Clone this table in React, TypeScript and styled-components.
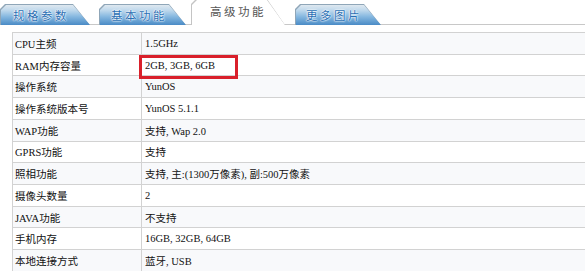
import styled, { createGlobalStyle } from "styled-components";

const GlobalStyle = createGlobalStyle`
  html, body {
    margin: 0;
    padding: 0;
    background: #ffffff;
    overflow: hidden;
  }
  body {
    font-family: "Liberation Serif", "Noto Sans CJK SC", serif;
  }
`;

const Page = styled.div`
  width: 585px;
  height: 271px;
  overflow: hidden;
  background: #fff;
`;

const TabBar = styled.div`
  display: flex;
  align-items: flex-end;
  height: 24px;
  border-bottom: 1px solid #c8c8c8;
`;

const tabShape = "polygon(0 5px, 5px 0, calc(100% - 17px) 0, 100% 100%, 0 100%)";

const Tab = styled.div<{ $offset: number; $width: number }>`
  margin-left: ${(p) => p.$offset}px;
  width: ${(p) => p.$width}px;
  height: 21px;
  margin-bottom: -1px;
  padding: 1px 0 0 1px;
  box-sizing: border-box;
  background: #8fa6b8;
  clip-path: ${tabShape};
`;

const TabFace = styled.div<{ $pad: number }>`
  height: 100%;
  display: flex;
  align-items: center;
  padding-left: ${(p) => p.$pad}px;
  box-sizing: border-box;
  background: linear-gradient(#dfe8ef 0%, #bcd7ec 28%, #86b8e0 58%, #4a8bc6 100%);
  clip-path: ${tabShape};
  font-family: "Noto Sans CJK SC", sans-serif;
  font-size: 11.5px;
  letter-spacing: 2.5px;
  color: #2a6fb3;
  text-shadow: 0 0 1px #fff, 0 0 2px #fff, 0 0 2px #fff;
`;

const ActiveTab = styled.div<{ $offset: number; $width: number }>`
  margin-left: ${(p) => p.$offset}px;
  width: ${(p) => p.$width}px;
  height: 26px;
  margin-bottom: -1px;
  padding: 1px 0 0 1px;
  box-sizing: border-box;
  background: #c4c4c4;
  clip-path: polygon(0 5px, 5px 0, calc(100% - 18px) 0, 100% 100%, 0 100%);
`;

const ActiveFace = styled.div`
  height: 100%;
  display: flex;
  align-items: center;
  padding: 0 0 3px 18px;
  box-sizing: border-box;
  background: #fff;
  clip-path: polygon(0 5px, 5px 0, calc(100% - 18px) 0, 100% 100%, 0 100%);
  font-family: "Noto Sans CJK SC", sans-serif;
  font-size: 11.5px;
  letter-spacing: 2.5px;
  color: #555;
`;

const Table = styled.div`
  margin: 7px 0 0 12px;
  border-top: 1px solid #d2d2d2;
  border-left: 1px solid #d2d2d2;
`;

const Row = styled.div<{ $shade: boolean }>`
  display: grid;
  grid-template-columns: 129px 1fr;
  height: 21.73px;
  box-sizing: border-box;
  border-bottom: 1px solid #d2d2d2;
  background: ${(p) => (p.$shade ? "#f8f9fb" : "#ffffff")};
  font-size: 10.5px;
  color: #111;
`;

const Label = styled.div`
  display: flex;
  align-items: center;
  padding-left: 2px;
  border-right: 1px solid #d2d2d2;
  white-space: nowrap;
`;

const Value = styled.div`
  position: relative;
  display: flex;
  align-items: center;
  padding-left: 3px;
  white-space: nowrap;
`;

const Highlight = styled.div`
  position: absolute;
  left: -3px;
  top: 0;
  width: 99px;
  height: 24px;
  box-sizing: border-box;
  border: 3px solid #d9202b;
`;

const tabs = [
  { label: "规格参数", offset: 0, width: 90, pad: 12 },
  { label: "基本功能", offset: 9, width: 87, pad: 11 },
];

const specs: [string, string][] = [
  ["CPU主频", "1.5GHz"],
  ["RAM内存容量", "2GB, 3GB, 6GB"],
  ["操作系统", "YunOS"],
  ["操作系统版本号", "YunOS 5.1.1"],
  ["WAP功能", "支持, Wap 2.0"],
  ["GPRS功能", "支持"],
  ["照相功能", "支持, 主:(1300万像素), 副:500万像素"],
  ["摄像头数量", "2"],
  ["JAVA功能", "不支持"],
  ["手机内存", "16GB, 32GB, 64GB"],
  ["本地连接方式", "蓝牙, USB"],
];

export default function App() {
  return (
    <Page>
      <GlobalStyle />
      <TabBar>
        {tabs.map((t) => (
          <Tab key={t.label} $offset={t.offset} $width={t.width}>
            <TabFace $pad={t.pad}>{t.label}</TabFace>
          </Tab>
        ))}
        <ActiveTab $offset={5} $width={94}>
          <ActiveFace>高级功能</ActiveFace>
        </ActiveTab>
        <Tab $offset={10} $width={86}>
          <TabFace $pad={10}>更多图片</TabFace>
        </Tab>
      </TabBar>
      <Table>
        {specs.map(([label, value], i) => (
          <Row key={label} $shade={i % 2 === 0}>
            <Label>{label}</Label>
            <Value>
              {value}
              {i === 1 && <Highlight />}
            </Value>
          </Row>
        ))}
      </Table>
    </Page>
  );
}
